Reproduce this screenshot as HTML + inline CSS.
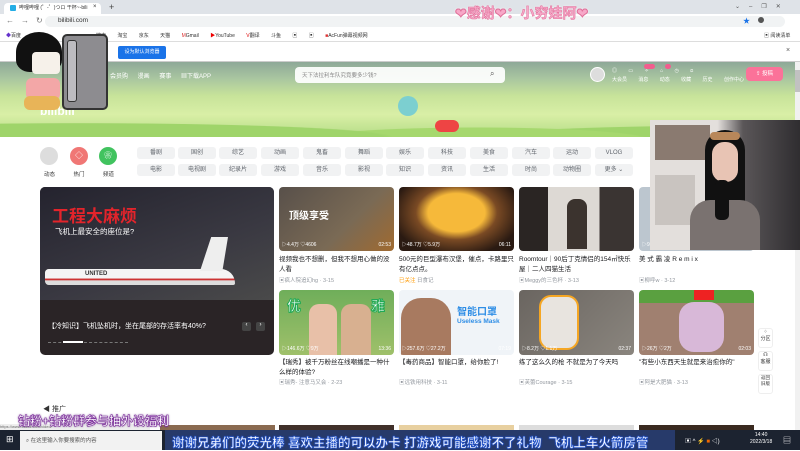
<!DOCTYPE html>
<html><head><meta charset="utf-8"><style>
*{margin:0;padding:0;box-sizing:border-box}
body{width:800px;height:450px;overflow:hidden;position:relative;background:#fff;font-family:"Liberation Sans","Noto Sans CJK SC",sans-serif;font-size:6px;color:#333}
.a{position:absolute}
.pill{position:absolute;width:38px;height:12px;background:#f1f2f3;border-radius:3px;font-size:6px;color:#61666d;text-align:center;line-height:12px}
.thumb{position:absolute;border-radius:4px;overflow:hidden}
.t{position:absolute;font-size:6.5px;color:#18191c;line-height:10px}
.au{position:absolute;font-size:5.5px;color:#9499a0}
.stat{position:absolute;bottom:3px;left:3px;font-size:5px;color:#fff}
.dur{position:absolute;bottom:3px;right:3px;font-size:5px;color:#fff}
.sub{font-weight:bold;color:#fff;-webkit-text-stroke:0.6px #2a5bd0;text-shadow:0 0 2px #1a46c0}
</style></head><body>
<div class="a" style="left:0;top:0;width:800px;height:14px;background:#dfe3e8"></div>
<div class="a" style="left:4px;top:3px;width:97px;height:11px;background:#fff;border-radius:4px 4px 0 0"></div>
<div class="a" style="left:10px;top:5px;width:6px;height:6px;background:#23ade5;border-radius:1px"></div>
<div class="a" style="left:19px;top:4px;font-size:5px;color:#333">哔哩哔哩 (゜-゜)つロ 干杯~-bili</div>
<div class="a" style="left:93px;top:4px;font-size:6px">×</div>
<div class="a" style="left:109px;top:2px;font-size:9px;color:#444">+</div>
<div class="a" style="left:735px;top:3px;font-size:6px;color:#555;letter-spacing:9px">⌄–❐✕</div>
<div class="a" style="left:0;top:14px;width:800px;height:15px;background:#fff"></div>
<div class="a" style="left:6px;top:16px;font-size:8px;color:#777;letter-spacing:7px">←→↻</div>
<div class="a" style="left:45px;top:16px;width:740px;height:11px;background:#f1f3f4;border-radius:6px"></div>
<div class="a" style="left:58px;top:17px;font-size:6.5px;color:#333">bilibili.com</div>
<div class="a" style="left:743px;top:16px;font-size:7px;color:#1a73e8">★</div>
<div class="a" style="left:758px;top:17px;width:6px;height:6px;background:#555;border-radius:50%"></div>
<div class="a" style="left:0;top:29px;width:800px;height:13px;background:#fff;border-bottom:1px solid #ddd"></div>
<div class="a" style="left:6px;top:32px;font-size:5px;color:#333;word-spacing:10px"><span style="color:#63c">◆</span>百度</div>
<div class="a" style="left:96px;top:32px;font-size:5px;color:#333;word-spacing:10px">搜索 淘宝 京东 天猫 <span style="color:#d33">M</span>Gmail <span style="color:#e00">▶</span>YouTube <span style="color:#d00">V</span>翻译 斗鱼 ▣ ▣ <span style="color:#d33">■</span>AcFun弹幕视频网</div>
<div class="a" style="left:764px;top:32px;font-size:5px;color:#333">▣ 阅读清单</div>
<div class="a" style="left:0;top:42px;width:800px;height:20px;background:#fff;border-bottom:1px solid #ccc"></div>
<div class="a" style="left:118px;top:46px;width:48px;height:13px;background:#1a73e8;border-radius:2px;color:#fff;font-size:5px;text-align:center;line-height:13px">设为默认浏览器</div>
<div class="a" style="left:786px;top:47px;font-size:7px;color:#555">×</div>
<div class="a" style="left:0;top:62px;width:795px;height:75px;background:linear-gradient(180deg,#8ea898 0%,#a9c6a0 22%,#c7e39a 45%,#d9efa6 70%,#b4dc86 100%)"></div>
<div class="a" style="left:0;top:105px;width:795px;height:32px;background:radial-gradient(ellipse at 10% 100%,#9fd46a 0 30%,transparent 31%),radial-gradient(ellipse at 60% 110%,#a6d86e 0 25%,transparent 26%),radial-gradient(ellipse at 95% 100%,#9fd46a 0 25%,transparent 26%)"></div>
<div class="a" style="left:110px;top:71px;font-size:6px;color:#fff;word-spacing:8px">会员购 漫画 赛事 ▦下载APP</div>
<div class="a" style="left:295px;top:67px;width:210px;height:16px;background:rgba(255,255,255,.92);border-radius:4px"></div>
<div class="a" style="left:302px;top:71px;font-size:5.5px;color:#888">天下法拉利车队究竟要多少钱?</div>
<div class="a" style="left:490px;top:69px;font-size:8px;color:#555">⌕</div>
<div class="a" style="left:590px;top:67px;width:15px;height:15px;background:#ddd;border:1px solid #fff;border-radius:50%"></div>
<div class="a" style="left:612px;top:67px;font-size:5px;color:#fff;word-spacing:10px;line-height:9px">◎ ▭ ✧ ⌂ ◷ ⍝<br>大会员 消息 动态 收藏 历史 创作中心</div>
<div class="a" style="left:644px;top:64px;width:11px;height:5px;background:#f25d8e;border-radius:3px"></div>
<div class="a" style="left:665px;top:64px;width:6px;height:5px;background:#f25d8e;border-radius:3px"></div>
<div class="a" style="left:746px;top:67px;width:37px;height:14px;background:#fb7299;border-radius:4px;color:#fff;font-size:5.5px;text-align:center;line-height:14px">⇪ 投稿</div>
<div class="a" style="left:40px;top:104px;font-size:12px;font-weight:bold;color:#fff">bilibili</div>
<div class="a" style="left:398px;top:96px;width:20px;height:20px;background:#7ccfd0;border-radius:50%"></div>
<div class="a" style="left:435px;top:120px;width:24px;height:12px;background:#e44;border-radius:6px"></div>
<div class="a" style="left:795px;top:62px;width:5px;height:368px;background:#f1f1f1"></div>
<div class="a" style="left:795px;top:70px;width:5px;height:22px;background:#c1c1c1"></div>
<div class="a" style="left:16px;top:32px;width:46px;height:40px;background:#111;border-radius:50% 50% 30% 30%"></div>
<div class="a" style="left:32px;top:52px;width:28px;height:22px;background:#f6f1ea;border-radius:4px"></div>
<div class="a" style="left:26px;top:78px;width:34px;height:22px;background:#f3a7a7;border-radius:6px"></div>
<div class="a" style="left:24px;top:96px;width:36px;height:14px;background:#e8b458;border-radius:6px"></div>
<div class="a" style="left:62px;top:34px;width:46px;height:76px;background:#8d8c90;border:2px solid #333;border-radius:5px"></div>
<div class="a" style="left:67px;top:40px;width:10px;height:62px;background:#bdbcc0;border:1px solid #333;border-radius:3px"></div>
<div class="a" style="left:40px;top:147px;width:18px;height:18px;background:#ddd;border-radius:50%"></div>
<div class="a" style="left:70px;top:147px;width:18px;height:18px;background:#f07775;border-radius:50%;color:#fff;text-align:center;line-height:18px;font-size:8px">◇</div>
<div class="a" style="left:99px;top:147px;width:18px;height:18px;background:#41c35f;border-radius:50%;color:#fff;text-align:center;line-height:18px;font-size:8px">❀</div>
<div class="a" style="left:44px;top:170px;font-size:5.5px;color:#333;word-spacing:17px">动态 热门 频道</div>
<div class="pill" style="left:137px;top:147px">番剧</div><div class="pill" style="left:178px;top:147px">国创</div><div class="pill" style="left:219px;top:147px">综艺</div><div class="pill" style="left:261px;top:147px">动画</div><div class="pill" style="left:303px;top:147px">鬼畜</div><div class="pill" style="left:345px;top:147px">舞蹈</div><div class="pill" style="left:386px;top:147px">娱乐</div><div class="pill" style="left:428px;top:147px">科技</div><div class="pill" style="left:470px;top:147px">美食</div><div class="pill" style="left:512px;top:147px">汽车</div><div class="pill" style="left:553px;top:147px">运动</div><div class="pill" style="left:595px;top:147px">VLOG</div>
<div class="pill" style="left:137px;top:164px">电影</div><div class="pill" style="left:178px;top:164px">电视剧</div><div class="pill" style="left:219px;top:164px">纪录片</div><div class="pill" style="left:261px;top:164px">游戏</div><div class="pill" style="left:303px;top:164px">音乐</div><div class="pill" style="left:345px;top:164px">影视</div><div class="pill" style="left:386px;top:164px">知识</div><div class="pill" style="left:428px;top:164px">资讯</div><div class="pill" style="left:470px;top:164px">生活</div><div class="pill" style="left:512px;top:164px">时尚</div><div class="pill" style="left:553px;top:164px">动物圈</div><div class="pill" style="left:595px;top:164px">更多 ⌄</div>
<div class="a" style="left:40px;top:187px;width:234px;height:168px;background:#2a2426;border-radius:5px;overflow:hidden">
 <div class="a" style="left:0;top:0;width:234px;height:113px;background:linear-gradient(160deg,#24232e,#3a3942 60%,#4a4a4a)"></div>
 <div class="a" style="left:12px;top:15px;font-size:17px;font-weight:bold;color:#e3242b">工程大麻烦</div>
 <div class="a" style="left:15px;top:39px;font-size:7.5px;color:#fff">飞机上最安全的座位是?</div>
 <div class="a" style="left:5px;top:82px;width:190px;height:16px;background:linear-gradient(180deg,#f4f4f4 60%,#c33 61%,#c33 70%,#ddd 71%);border-radius:8px 30px 4px 8px"></div>
 <div class="a" style="left:160px;top:50px;width:28px;height:34px;background:#eee;clip-path:polygon(40% 0,100% 0,80% 100%,0 100%)"></div>
 <div class="a" style="left:45px;top:84px;font-size:6px;font-weight:bold;color:#333">UNITED</div>
 <div class="a" style="left:8px;top:134px;font-size:7px;color:#fff">【冷知识】飞机坠机时，坐在尾部的存活率有40%?</div>
 <div class="a" style="left:202px;top:135px;width:9px;height:9px;background:#444;border-radius:2px;color:#fff;font-size:6px;text-align:center">‹</div>
 <div class="a" style="left:216px;top:135px;width:9px;height:9px;background:#444;border-radius:2px;color:#fff;font-size:6px;text-align:center">›</div>
 <div class="a" style="left:8px;top:155px;width:80px;height:1px;border-top:1px dashed #777"></div>
 <div class="a" style="left:23px;top:154px;width:20px;height:2px;background:#fff"></div>
</div>
<div class="thumb" style="left:279px;top:187px;width:115px;height:64px;background:linear-gradient(135deg,#58504a,#7a6a55 60%,#a06a30)"><div class="a" style="left:10px;top:20px;font-size:10px;color:#fff;font-weight:bold">顶级享受</div><div class="stat">▷4.4万 ♡4606</div><div class="dur">02:53</div></div>
<div class="t" style="left:279px;top:255px;width:115px">视频我也不想删，但我不想用心做的没人看</div>
<div class="au" style="left:279px;top:276px">▣疯人院追幻hg · 3-15</div>
<div class="thumb" style="left:399px;top:187px;width:115px;height:64px;background:radial-gradient(ellipse at 50% 40%,#f6b93a 0 35%,#7a4a24 50%,#2a1a12 80%)"><div class="stat">▷48.7万 ♡5.9万</div><div class="dur">06:11</div></div>
<div class="t" style="left:399px;top:255px;width:115px">500元的巨型瀑布汉堡，催点，卡路里只有亿点点。</div>
<div class="au" style="left:399px;top:276px"><span style="color:#f90">已关注</span> 日食记</div>
<div class="thumb" style="left:519px;top:187px;width:115px;height:64px;background:linear-gradient(90deg,#2a2523 0 25%,#ddd9d4 25% 70%,#3a3432 70%)"><div class="a" style="left:48px;top:12px;width:20px;height:50px;background:#3b332e;border-radius:8px 8px 0 0"></div></div>
<div class="t" style="left:519px;top:255px;width:115px">Roomtour｜90后丁克情侣的154㎡快乐屋｜二人四猫生活</div>
<div class="au" style="left:519px;top:276px">▣Meggy的三色杯 · 3-13</div>
<div class="thumb" style="left:639px;top:187px;width:115px;height:64px;background:#bcc6cf"><div class="stat">▷9035 ♡8.7万</div><div class="dur">01:26</div></div>
<div class="t" style="left:639px;top:255px">美 式 霸 凌 R e m i x</div>
<div class="au" style="left:639px;top:276px">▣柳呼w · 3-12</div>
<div class="thumb" style="left:279px;top:290px;width:115px;height:65px;background:linear-gradient(180deg,#6fae5a,#9fc06a)"><div class="a" style="left:8px;top:6px;font-size:14px;color:#fff;font-weight:bold;-webkit-text-stroke:1px #2a5">优</div><div class="a" style="left:92px;top:6px;font-size:14px;color:#fff;font-weight:bold;-webkit-text-stroke:1px #2a5">雅</div><div class="a" style="left:30px;top:14px;width:28px;height:51px;background:#e8c0a8;border-radius:10px 10px 0 0"></div><div class="a" style="left:62px;top:14px;width:30px;height:51px;background:#d8b090;border-radius:10px 10px 0 0"></div><div class="stat">▷146.6万 ♡9万</div><div class="dur">13:36</div></div>
<div class="t" style="left:279px;top:358px;width:115px">【瑞秀】被千万粉丝在线嘲播是一种什么样的体验?</div>
<div class="au" style="left:279px;top:378px">▣瑞秀- 注意马又会 · 2-23</div>
<div class="thumb" style="left:399px;top:290px;width:115px;height:65px;background:#f0f4f8"><div class="a" style="left:2px;top:8px;width:50px;height:57px;background:#a87a60;border-radius:20px 20px 0 0"></div><div class="a" style="left:58px;top:13px;font-size:10px;color:#2f8ee6;font-weight:bold">智能口罩</div><div class="a" style="left:58px;top:28px;font-size:6.5px;color:#2f8ee6;font-weight:bold">Useless Mask</div><div class="stat">▷257.6万 ♡27.2万</div><div class="dur">07:19</div></div>
<div class="t" style="left:399px;top:358px">【毒药商品】智能口罩，给你脸了!</div>
<div class="au" style="left:399px;top:378px">▣远铁用科技 · 3-11</div>
<div class="thumb" style="left:519px;top:290px;width:115px;height:65px;background:linear-gradient(135deg,#6a6560,#8a857e)"><div class="a" style="left:20px;top:5px;width:40px;height:55px;border:2px solid #f5a623;background:#e8e4df;border-radius:12px"></div><div class="stat">▷8.2万 ♡1.1万</div><div class="dur">02:37</div></div>
<div class="t" style="left:519px;top:358px">练了这么久的枪 不就是为了今天吗</div>
<div class="au" style="left:519px;top:378px">▣芙蕾Courage · 3-15</div>
<div class="thumb" style="left:639px;top:290px;width:115px;height:65px;background:linear-gradient(180deg,#5aa040 0 20%,#a08070 20%)"><div class="a" style="left:55px;top:0;width:20px;height:10px;background:#e22"></div><div class="a" style="left:40px;top:12px;width:45px;height:50px;background:#d8b8d8;border-radius:15px"></div><div class="stat">▷26万 ♡2万</div><div class="dur">02:03</div></div>
<div class="t" style="left:639px;top:358px">"有些小东西天生就是来治愈你的"</div>
<div class="au" style="left:639px;top:378px">▣阿是大肥猫 · 3-13</div>
<div class="a" style="left:758px;top:328px;width:15px;height:20px;border:1px solid #eee;border-radius:3px;font-size:5px;text-align:center;color:#333">⁘<br>分区</div>
<div class="a" style="left:758px;top:351px;width:15px;height:20px;border:1px solid #eee;border-radius:3px;font-size:5px;text-align:center;color:#333">☊<br>客服</div>
<div class="a" style="left:758px;top:374px;width:15px;height:20px;border:1px solid #eee;border-radius:3px;font-size:4.5px;text-align:center;color:#333">返回<br>旧版</div>
<div class="a" style="left:650px;top:120px;width:150px;height:130px;background:linear-gradient(90deg,#e3dfdc 0 45%,#5a5658 62%,#2f2d30 100%)">
 <div class="a" style="left:5px;top:5px;width:55px;height:35px;background:#8a7a70"></div>
 <div class="a" style="left:5px;top:55px;width:40px;height:50px;background:#c9c4c0"></div>
 <div class="a" style="left:55px;top:10px;width:40px;height:110px;background:#111;border-radius:20px 20px 0 0"></div>
 <div class="a" style="left:62px;top:22px;width:26px;height:40px;background:#e8c4b4;border-radius:12px"></div>
 <div class="a" style="left:60px;top:12px;width:30px;height:8px;background:#b8875a;border-radius:5px"></div>
 <div class="a" style="left:40px;top:80px;width:70px;height:50px;background:#7a7270;border-radius:20px 20px 0 0"></div>
 <div class="a" style="left:65px;top:60px;width:14px;height:40px;background:#111;border-radius:5px"></div>
</div>
<div class="a" style="left:43px;top:404px;font-size:7px;color:#333">◀ 推广</div>
<div class="a" style="left:160px;top:425px;width:115px;height:5px;background:#8a6a50"></div>
<div class="a" style="left:279px;top:425px;width:115px;height:5px;background:#40302a"></div>
<div class="a" style="left:399px;top:425px;width:115px;height:5px;background:#e8d0a0"></div>
<div class="a" style="left:519px;top:425px;width:115px;height:5px;background:#ddd"></div>
<div class="a" style="left:639px;top:425px;width:115px;height:5px;background:#3a2a20"></div>
<div class="a" style="left:0;top:424px;width:150px;height:7px;background:#eee;font-size:4px;color:#666">https://www.bilibili.com/video/</div>
<div class="a sub" style="left:18px;top:412px;font-size:12px;color:#fff;-webkit-text-stroke:0.6px #7a2a9a;text-shadow:0 0 2px #5a1a7a">钻粉+钻粉群参与抽外设福利</div>
<div class="a" style="left:0;top:430px;width:800px;height:20px;background:#1c2330"></div>
<div class="a" style="left:6px;top:434px;font-size:9px;color:#fff">⊞</div>
<div class="a" style="left:20px;top:431px;width:142px;height:19px;background:#f2f2f2"></div>
<div class="a" style="left:26px;top:436px;font-size:5.5px;color:#555">⌕ 在这里输入你要搜索的内容</div>
<div class="a" style="left:165px;top:430px;width:510px;height:20px;background:#273a6a"></div>
<div class="a sub" style="left:172px;top:432px;font-size:12.5px;white-space:nowrap">谢谢兄弟们的荧光棒 喜欢主播的可以办卡 打游戏可能感谢不了礼物&nbsp;&nbsp;飞机上车火箭房管</div>
<div class="a" style="left:685px;top:436px;font-size:6px;color:#fff">▣ ^ <span style="color:#fb0">⚡</span> <span style="color:#e60">■</span> ◁)</div>
<div class="a" style="left:750px;top:432px;font-size:5px;color:#fff;text-align:center;line-height:7px">14:40<br>2022/3/18</div>
<div class="a" style="left:783px;top:435px;font-size:8px;color:#fff">▤</div>
<div class="a" style="left:455px;top:3px;font-size:14px;font-weight:bold;color:#f7a8c8;-webkit-text-stroke:0.5px #e0709a;text-shadow:0 0 2px #fff">❤感谢❤：小穷娃阿❤</div>
</body></html>
